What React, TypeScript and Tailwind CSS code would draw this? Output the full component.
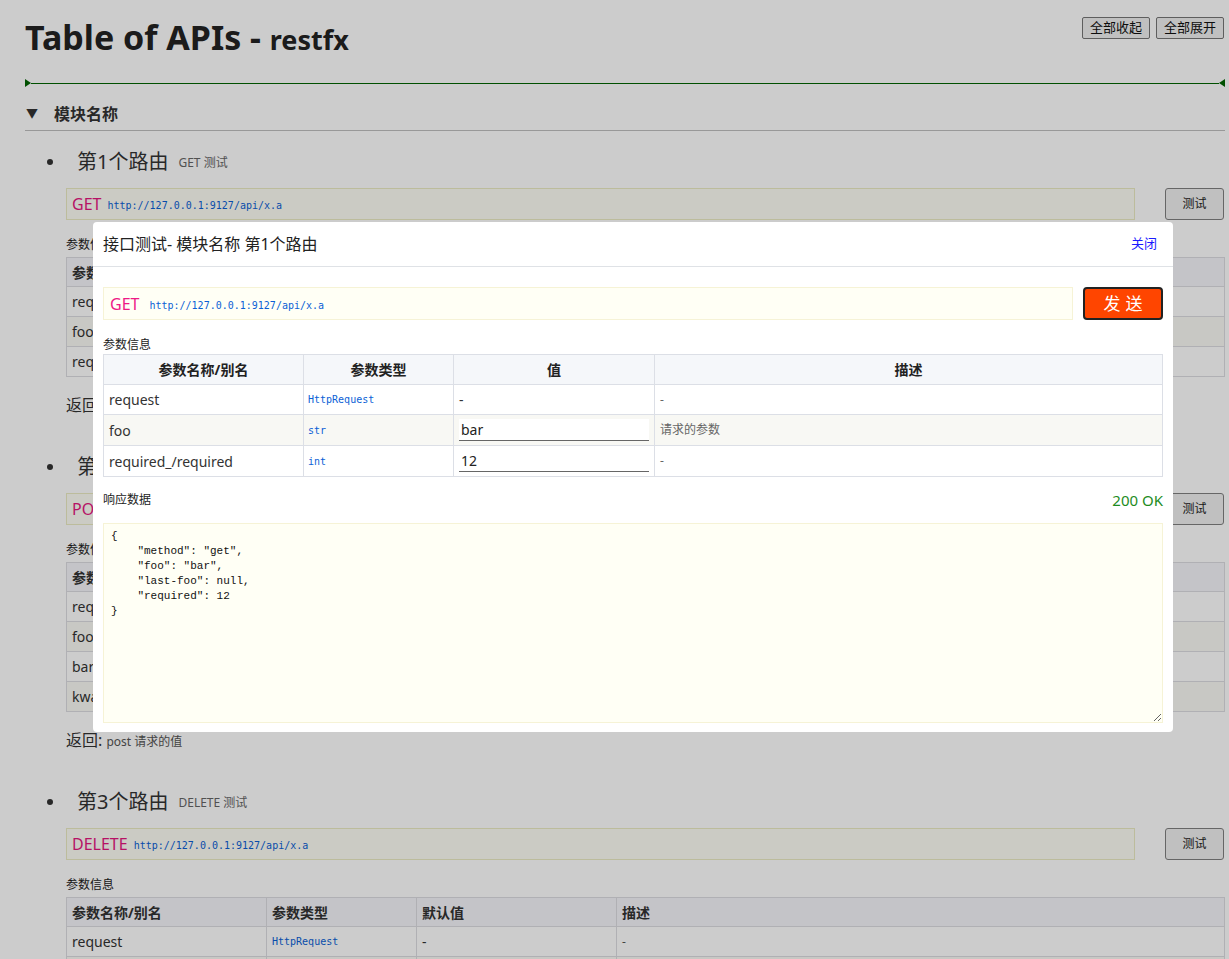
import React from "react";

type Param = { name: string; type: string; def: string; desc: string };
type Route = {
  title: string;
  method: string;
  note: string;
  params: Param[];
  ret: string;
};

const URL = "http://127.0.0.1:9127/api/x.a";

const ROUTES: Route[] = [
  {
    title: "第1个路由",
    method: "GET",
    note: "GET 测试",
    params: [
      { name: "request", type: "HttpRequest", def: "-", desc: "-" },
      { name: "foo", type: "str", def: "-", desc: "请求的参数" },
      { name: "required_/required", type: "int", def: "-", desc: "-" },
    ],
    ret: "get 请求的值",
  },
  {
    title: "第2个路由",
    method: "POST",
    note: "POST 测试",
    params: [
      { name: "request", type: "HttpRequest", def: "-", desc: "-" },
      { name: "foo", type: "str", def: "-", desc: "请求的参数" },
      { name: "bar", type: "str", def: "-", desc: "-" },
      { name: "kwargs", type: "dict", def: "-", desc: "-" },
    ],
    ret: "post 请求的值",
  },
  {
    title: "第3个路由",
    method: "DELETE",
    note: "DELETE 测试",
    params: [
      { name: "request", type: "HttpRequest", def: "-", desc: "-" },
      { name: "foo", type: "str", def: "-", desc: "-" },
    ],
    ret: "delete 请求的值",
  },
];

const RESPONSE = `{
    "method": "get",
    "foo": "bar",
    "last-foo": null,
    "required": 12
}`;

function RouteBlock({ route }: { route: Route }) {
  return (
    <div className="pl-[41px]">
      {/* title */}
      <div className="flex items-center h-[28px] -ml-[19px]">
        <span className="w-[6px] h-[6px] rounded-full bg-[#333]" />
        <span className="ml-[24px] text-[20px] text-[#333]">{route.title}</span>
        <span className="ml-[10px] text-[12px] text-[#666] mt-[2px]">{route.note}</span>
      </div>

      {/* method + url */}
      <div className="flex gap-[30px] mt-[12px]">
        <div className="flex-1 h-[32px] flex items-center px-[5px] bg-[#fefef5] border border-[#ecebc4]">
          <span className="text-[16px] text-[#e5167f]">{route.method}</span>
          <span className="ml-[6px] mt-[3px] text-[10px] text-[#0b5fd6] font-['DejaVu_Sans_Mono',monospace]">
            {URL}
          </span>
        </div>
        <button className="w-[59px] h-[32px] mr-[1px] bg-[#f0f0f0] border border-[#808080] rounded-[3px] text-[12px] text-[#222]">
          测试
        </button>
      </div>

      <div className="mt-[17px] text-[12px] leading-[16px] text-[#222]">参数信息</div>
      <table className="mt-[4px] w-full border-collapse text-[14px] text-[#333]">
        <thead>
          <tr className="h-[29px] bg-[#f5f6fa]">
            <th className="w-[200px] border border-[#dcdde2] px-[5px] text-left font-bold">参数名称/别名</th>
            <th className="w-[150px] border border-[#dcdde2] px-[5px] text-left font-bold">参数类型</th>
            <th className="w-[200px] border border-[#dcdde2] px-[5px] text-left font-bold">默认值</th>
            <th className="border border-[#dcdde2] px-[5px] text-left font-bold">描述</th>
          </tr>
        </thead>
        <tbody>
          {route.params.map((p, i) => (
            <tr key={p.name} className={i % 2 === 1 ? "h-[30px] bg-[#fafaf5]" : "h-[30px] bg-white"}>
              <td className="border border-[#dcdde2] px-[5px]">{p.name}</td>
              <td className="border border-[#dcdde2] px-[5px] text-[10px] text-[#0b5fd6] font-['DejaVu_Sans_Mono',monospace]">
                {p.type}
              </td>
              <td className="border border-[#dcdde2] px-[5px]">{p.def}</td>
              <td className="border border-[#dcdde2] px-[5px] text-[12px] text-[#555]">{p.desc}</td>
            </tr>
          ))}
        </tbody>
      </table>

      <div className="mt-[18px] leading-[20px] text-[#333]">
        <span className="text-[16px]">返回:</span>{" "}
        <span className="text-[12px] text-[#555]">{route.ret}</span>
      </div>
    </div>
  );
}

function TestDialog() {
  return (
    <div className="absolute left-[93px] top-[222px] w-[1080px] bg-white rounded-[4px] text-[#333]">
      <div className="h-[45px] flex items-center justify-between pl-[10px] pr-[16px] border-b border-[#dfe2e6]">
        <span className="text-[16px] text-[#222]">接口测试- 模块名称 第1个路由</span>
        <span className="text-[13px] text-[#1a1aff]">关闭</span>
      </div>

      <div className="px-[10px] pt-[20px] pb-[9px]">
        <div className="flex gap-[10px]">
          <div className="flex-1 h-[33px] flex items-center px-[6px] bg-[#fffff5] border border-[#f6f3d6]">
            <span className="text-[16px] text-[#ee1a86]">GET</span>
            <span className="ml-[10px] mt-[3px] text-[10px] text-[#0b5fd6] font-['DejaVu_Sans_Mono',monospace]">
              {URL}
            </span>
          </div>
          <button className="w-[80px] h-[33px] bg-[#ff4500] border-2 border-[#222] rounded-[4px] text-[17px] text-white tracking-[5px] pl-[5px]">
            发送
          </button>
        </div>

        <div className="mt-[17px] mb-[1px] text-[12px] leading-[16px] text-[#222]">参数信息</div>
        <table className="w-full border-collapse text-[14px] text-[#333]">
          <thead>
            <tr className="h-[30px] bg-[#f5f7fa]">
              <th className="w-[200px] border border-[#dcdfe6] font-bold text-[#222]">参数名称/别名</th>
              <th className="w-[150px] border border-[#dcdfe6] font-bold text-[#222]">参数类型</th>
              <th className="w-[200px] border border-[#dcdfe6] font-bold text-[#222]">值</th>
              <th className="border border-[#dcdfe6] font-bold text-[#222]">描述</th>
            </tr>
          </thead>
          <tbody>
            <tr className="h-[30px]">
              <td className="border border-[#dcdfe6] px-[5px]">request</td>
              <td className="border border-[#dcdfe6] px-[4px] text-[10px] text-[#0b5fd6] font-['DejaVu_Sans_Mono',monospace]">
                HttpRequest
              </td>
              <td className="border border-[#dcdfe6] px-[5px]">-</td>
              <td className="border border-[#dcdfe6] px-[5px] text-[12px] text-[#666]">-</td>
            </tr>
            <tr className="h-[31px] bg-[#f8f8f4]">
              <td className="border border-[#dcdfe6] px-[5px]">foo</td>
              <td className="border border-[#dcdfe6] px-[4px] text-[10px] text-[#0b5fd6] font-['DejaVu_Sans_Mono',monospace]">
                str
              </td>
              <td className="border border-[#dcdfe6] px-[5px]">
                <input
                  readOnly
                  value="bar"
                  className="w-[190px] h-[22px] px-[2px] bg-white border-b border-[#666] outline-none text-[14px] text-[#222]"
                />
              </td>
              <td className="border border-[#dcdfe6] px-[5px] text-[12px] text-[#666]">请求的参数</td>
            </tr>
            <tr className="h-[31px]">
              <td className="border border-[#dcdfe6] px-[5px]">required_/required</td>
              <td className="border border-[#dcdfe6] px-[4px] text-[10px] text-[#0b5fd6] font-['DejaVu_Sans_Mono',monospace]">
                int
              </td>
              <td className="border border-[#dcdfe6] px-[5px]">
                <input
                  readOnly
                  value="12"
                  className="w-[190px] h-[22px] px-[2px] bg-white border-b border-[#666] outline-none text-[14px] text-[#222]"
                />
              </td>
              <td className="border border-[#dcdfe6] px-[5px] text-[12px] text-[#666]">-</td>
            </tr>
          </tbody>
        </table>

        <div className="mt-[14px] flex items-center justify-between h-[18px]">
          <span className="text-[12px] text-[#222]">响应数据</span>
          <span className="text-[15px] text-[#1e8c1e]">200 OK</span>
        </div>

        <textarea
          readOnly
          value={RESPONSE}
          className="mt-[14px] block w-full h-[200px] px-[7px] py-[5px] bg-[#fffff5] border border-[#f6f3d6] outline-none text-[11px] leading-[15px] text-[#111] font-['Liberation_Mono',monospace]"
        />
      </div>
    </div>
  );
}

export default function App() {
  return (
    <div className="relative h-screen overflow-hidden bg-white font-['Noto_Sans','Noto_Sans_CJK_SC',sans-serif]">
      <div className="pl-[25px] pr-[4px]">
        {/* header */}
        <div className="flex items-start justify-between">
          <h1 className="mt-[16px] h-[42px] leading-[42px] font-bold text-[#222]">
            <span className="text-[34px]">Table of APIs - </span>
            <span className="text-[27px]">restfx</span>
          </h1>
          <div className="mt-[17px] flex gap-[6px] mr-[1px]">
            <button className="h-[22px] px-[7px] bg-[#f0f0f0] border border-[#767676] rounded-[2px] text-[13px] text-[#111]">
              全部收起
            </button>
            <button className="h-[22px] px-[7px] bg-[#f0f0f0] border border-[#767676] rounded-[2px] text-[13px] text-[#111]">
              全部展开
            </button>
          </div>
        </div>

        {/* divider with end markers */}
        <div className="mt-[21px] flex items-center h-[8px]">
          <svg width="6" height="8" viewBox="0 0 6 8">
            <polygon points="0,0 6,4 0,8" fill="#006400" />
          </svg>
          <div className="flex-1 h-px bg-[#006400]" />
          <svg width="6" height="8" viewBox="0 0 6 8">
            <polygon points="6,0 0,4 6,8" fill="#006400" />
          </svg>
        </div>

        {/* module */}
        <div className="mt-[15px] h-[24px] flex items-center border-b border-[#bfbfbf] box-content pb-[4px]">
          <span className="ml-[1px] text-[12px] text-[#333]">▼</span>
          <span className="ml-[16px] text-[16px] font-bold text-[#333]">模块名称</span>
        </div>

        <div className="mt-[17px] flex flex-col gap-[36px]">
          {ROUTES.map((r) => (
            <RouteBlock key={r.title} route={r} />
          ))}
        </div>
      </div>

      {/* dim overlay */}
      <div className="absolute inset-0 bg-black/20" />

      <TestDialog />
    </div>
  );
}
